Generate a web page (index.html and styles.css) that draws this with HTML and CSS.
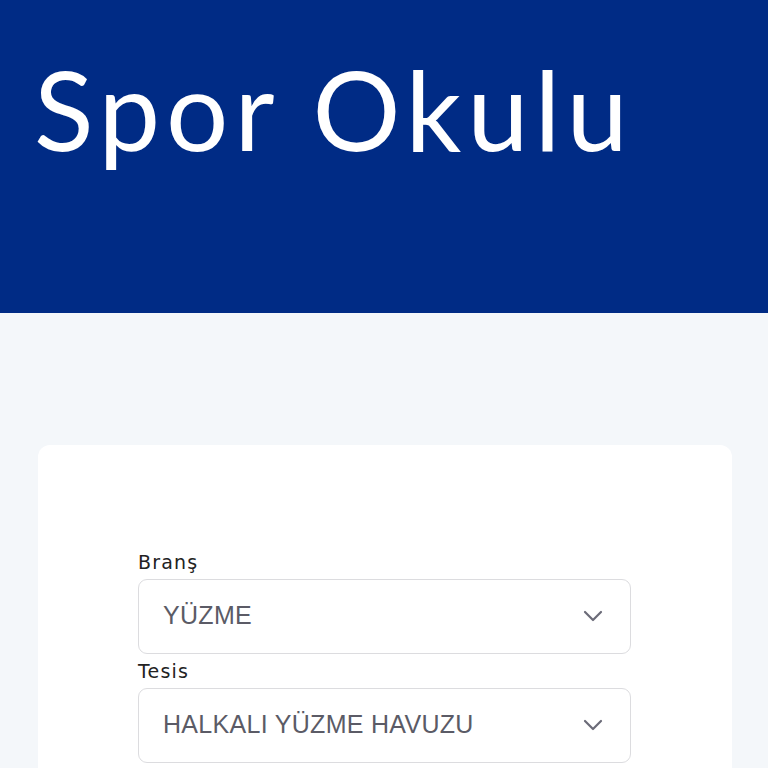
FILE: index.html
```html
<!DOCTYPE html>
<html lang="tr">

<head>
    <meta charset="utf-8">
    <meta name="viewport" content="width=device-width, initial-scale=1.0">
    <title>Spor Okulu</title>
    <link rel="stylesheet" href="styles.css">
</head>

<body>

    <header class="banner">
        <h1>Spor Okulu</h1>
    </header>

    <main>
        <section class="kart">
            <form class="secim">
                <label for="brans">Branş</label>
                <div class="kutu">
                    <select id="brans">
                        <option>YÜZME</option>
                    </select>
                    <svg class="ok" width="20" height="12" viewBox="0 0 20 12"><path d="M2 2l8 8 8-8" fill="none" stroke="#6b6b78" stroke-width="2.2" stroke-linecap="round" stroke-linejoin="round"/></svg>
                </div>

                <label for="tesis">Tesis</label>
                <div class="kutu">
                    <select id="tesis">
                        <option>HALKALI YÜZME HAVUZU</option>
                    </select>
                    <svg class="ok" width="20" height="12" viewBox="0 0 20 12"><path d="M2 2l8 8 8-8" fill="none" stroke="#6b6b78" stroke-width="2.2" stroke-linecap="round" stroke-linejoin="round"/></svg>
                </div>
            </form>
        </section>
    </main>

</body></html>
```

FILE: styles.css
```css
body {
    margin: 0;
    font-family: Lato, "Noto Sans", sans-serif;
    background-color: #f4f7fa;
}

.banner {
    background-color: #002b85;
    height: 313px;
    padding: 0 34px;
    box-sizing: border-box;
}

.banner h1 {
    margin: 0;
    padding-top: 48px;
    color: white;
    font-weight: 400;
    font-size: 110px;
    letter-spacing: 6px;
    line-height: 120px;
}

main {
    padding: 132px 36px 0 38px;
}

.kart {
    background-color: white;
    border-radius: 12px;
    padding: 104px 100px 40px;
    min-height: 400px;
}

.secim {
    display: flex;
    flex-direction: column;
    width: 493px;
}

label {
    color: #222;
    font-family: "DejaVu Sans", sans-serif;
    font-size: 19px;
    letter-spacing: 1.2px;
    line-height: 26px;
    margin-bottom: 4px;
}

.kutu {
    position: relative;
    margin-bottom: 4px;
}

select {
    display: block;
    appearance: none;
    width: 100%;
    height: 75px;
    border: 1px solid #dcdcdf;
    border-radius: 9px;
    background-color: white;
    padding: 0 24px 3px;
    font-family: "Liberation Sans", Arial, sans-serif;
    font-size: 25px;
    letter-spacing: 0.3px;
    color: #5b5b66;
}

.ok {
    position: absolute;
    right: 28px;
    top: 31px;
    pointer-events: none;
}
```
